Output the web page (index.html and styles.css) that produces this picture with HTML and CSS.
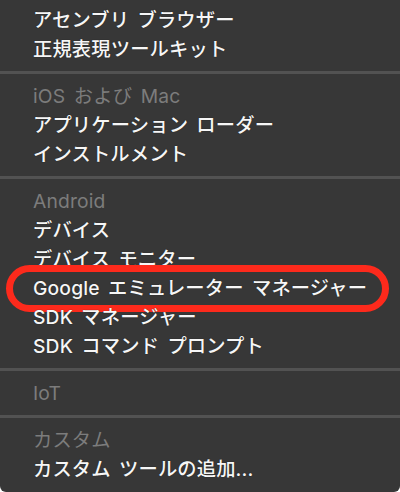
FILE: index.html
```html
<!DOCTYPE html>
<html lang="ja">
<head>
<meta charset="utf-8">
<link rel="stylesheet" href="styles.css">
</head>
<body>
<div class="menu">
  <div class="item">アセンブリ ブラウザー</div>
  <div class="item">正規表現ツールキット</div>
  <div class="sep"></div>
  <div class="item header">iOS および Mac</div>
  <div class="item">アプリケーション ローダー</div>
  <div class="item">インストルメント</div>
  <div class="sep"></div>
  <div class="item header">Android</div>
  <div class="item">デバイス</div>
  <div class="item">デバイス モニター</div>
  <div class="item highlighted">Google エミュレーター マネージャー<span class="ring"></span></div>
  <div class="item">SDK マネージャー</div>
  <div class="item">SDK コマンド プロンプト</div>
  <div class="sep"></div>
  <div class="item header">IoT</div>
  <div class="sep"></div>
  <div class="item header">カスタム</div>
  <div class="item">カスタム ツールの追加...</div>
</div>
</body>
</html>
```

FILE: styles.css
```css
html, body {
  margin: 0;
  padding: 0;
  background: #ffffff;
}

.menu {
  width: 400px;
  height: 492px;
  box-sizing: border-box;
  padding-top: 6px;
  background: #373737;
  border-radius: 0 0 6px 6px;
  font-family: "Inter", "Noto Sans CJK JP", sans-serif;
  font-size: 19.3px;
  font-weight: 500;
  word-spacing: 3px;
  letter-spacing: 0.15px;
  overflow: hidden;
}

.item {
  position: relative;
  height: 29px;
  line-height: 29px;
  padding-left: 33px;
  color: #f6f6f6;
  white-space: nowrap;
  text-shadow: 0 0 1px rgba(0, 0, 0, 0.7);
}

.item.header {
  color: #7c7c7c;
  font-weight: 400;
  text-shadow: none;
}

.sep {
  height: 18px;
  display: flex;
  flex-direction: column;
  padding-top: 7px;
  box-sizing: border-box;
}

.sep::before {
  content: "";
  display: block;
  height: 3px;
  background: #525252;
}

.ring {
  position: absolute;
  left: 6px;
  top: -9px;
  width: 383px;
  height: 47px;
  box-sizing: border-box;
  border: 7px solid #fd2a1c;
  border-radius: 24px;
}
```
